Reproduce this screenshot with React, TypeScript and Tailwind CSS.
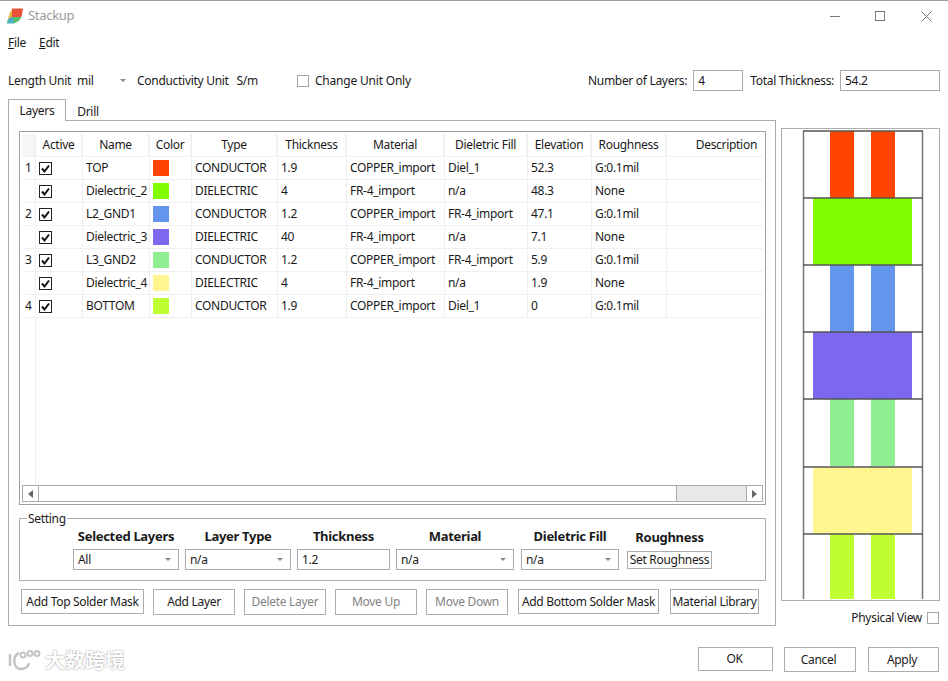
import React from 'react';

const rows = [
  { no: '1', name: 'TOP', color: 'bg-[#ff4500]', type: 'CONDUCTOR', th: '1.9', mat: 'COPPER_import', fill: 'Diel_1', el: '52.3', rough: 'G:0.1mil' },
  { no: '', name: 'Dielectric_2', color: 'bg-[#7fff00]', type: 'DIELECTRIC', th: '4', mat: 'FR-4_import', fill: 'n/a', el: '48.3', rough: 'None' },
  { no: '2', name: 'L2_GND1', color: 'bg-[#6495ed]', type: 'CONDUCTOR', th: '1.2', mat: 'COPPER_import', fill: 'FR-4_import', el: '47.1', rough: 'G:0.1mil' },
  { no: '', name: 'Dielectric_3', color: 'bg-[#7b68ee]', type: 'DIELECTRIC', th: '40', mat: 'FR-4_import', fill: 'n/a', el: '7.1', rough: 'None' },
  { no: '3', name: 'L3_GND2', color: 'bg-[#90ee90]', type: 'CONDUCTOR', th: '1.2', mat: 'COPPER_import', fill: 'FR-4_import', el: '5.9', rough: 'G:0.1mil' },
  { no: '', name: 'Dielectric_4', color: 'bg-[#fff68f]', type: 'DIELECTRIC', th: '4', mat: 'FR-4_import', fill: 'n/a', el: '1.9', rough: 'None' },
  { no: '4', name: 'BOTTOM', color: 'bg-[#bfff32]', type: 'CONDUCTOR', th: '1.9', mat: 'COPPER_import', fill: 'Diel_1', el: '0', rough: 'G:0.1mil' },
];

const cell = 'shrink-0 h-full flex items-center border-r border-[#f0f0f0] pl-[3px] whitespace-nowrap';
const head = 'shrink-0 h-full flex items-center justify-center border-r-2 border-[#f0f0f0] whitespace-nowrap';

const Check = () => (
  <svg width="13" height="13" viewBox="0 0 13 13" className="shrink-0">
    <rect x="0.5" y="0.5" width="12" height="12" fill="#fff" stroke="#222" />
    <path d="M3 6.5 L5.5 9.5 L10 3.5" fill="none" stroke="#111" strokeWidth="2" />
  </svg>
);

const Arrow = () => (
  <svg width="6" height="3" viewBox="0 0 6 3" className="shrink-0">
    <path d="M0 0 H6 L3 3 Z" fill="#8a8a8a" />
  </svg>
);

const Select = ({ value, className }: { value: string; className: string }) => (
  <div className={`h-[21px] border border-[#ababab] flex items-center justify-between pl-1 pr-[7px] ${className}`}>
    <span>{value}</span>
    <Arrow />
  </div>
);

const Btn = ({ label, className, off }: { label: string; className: string; off?: boolean }) => (
  <div className={`border border-[#adadad] flex items-center justify-center whitespace-nowrap ${off ? 'text-[#838383]' : ''} ${className}`}>
    {label}
  </div>
);

const Label = ({ text, className }: { text: string; className: string }) => (
  <div className={`text-center font-bold text-[13px] whitespace-nowrap ${className}`}>{text}</div>
);

const StackView = () => {
  const tops = [131, 198, 265, 332, 399, 467, 534];
  const colors = ['#ff4500', '#7fff00', '#6495ed', '#7b68ee', '#90ee90', '#fff68f', '#bfff32'];
  return (
    <svg width="157" height="471" viewBox="782 129 157 471" className="block">
      {tops.map((y, i) =>
        i % 2 === 0 ? (
          <g key={y}>
            <rect x="830" y={y} width="24" height={i === 6 ? 65 : 67} fill={colors[i]} />
            <rect x="871" y={y} width="24" height={i === 6 ? 65 : 67} fill={colors[i]} />
          </g>
        ) : (
          <rect key={y} x="813" y={y} width="99" height="67" fill={colors[i]} />
        ),
      )}
      <path d="M803.5 131 V599 M922.5 131 V599" stroke="#777" strokeWidth="1.5" fill="none" />
      {tops.map((y) => (
        <path key={y} d={`M803 ${y} H923`} stroke="#555" strokeWidth="1.5" />
      ))}
    </svg>
  );
};

export default function App() {
  return (
    <div className="w-[948px] h-[681px] bg-white text-[12px] tracking-[-0.3px] text-[#1a1a1a] overflow-hidden flex flex-col font-['Noto_Sans','Open_Sans',sans-serif]">
      {/* title bar */}
      <div className="h-[31px] shrink-0 border-t border-[#9f9f9f] flex items-center pl-[7px]">
        <svg width="16" height="16" viewBox="0 0 16 16" className="shrink-0">
          <path d="M5 0.5 H16 L14.5 9 L4 10 Z" fill="#e8503a" />
          <path d="M3 4 L5 2 V10 L2.5 13 H0.5 Z" fill="#e8b83a" />
          <path d="M0.5 12 L4 9 H9 L7 15.5 H0 Z" fill="#4ab0c0" />
          <path d="M6 9 H14.5 L12 13 L7 15.5 Z" fill="#58c070" />
        </svg>
        <span className="ml-[5px] text-[#9a9a9a] text-[13px]">Stackup</span>
        <div className="ml-auto flex items-center pr-[16px]">
          <div className="w-[10px] h-px bg-[#777]" />
          <div className="ml-[35px] w-[10px] h-[10px] border border-[#777]" />
          <svg width="11" height="11" viewBox="0 0 11 11" className="ml-[36px]">
            <path d="M0.5 0.5 L10.5 10.5 M10.5 0.5 L0.5 10.5" stroke="#777" fill="none" />
          </svg>
        </div>
      </div>

      {/* menu */}
      <div className="h-[23px] shrink-0 flex items-center gap-[13px] pl-2">
        <span><span className="underline">F</span>ile</span>
        <span><span className="underline">E</span>dit</span>
      </div>

      {/* units */}
      <div className="h-[21px] shrink-0 mt-[16px] flex items-center pl-2 pr-2">
        <span>Length Unit</span>
        <span className="ml-[6px] w-[43px]">mil</span>
        <Arrow />
        <span className="ml-[11px]">Conductivity Unit</span>
        <span className="ml-[8px]">S/m</span>
        <div className="ml-[39px] w-[12px] h-[12px] border border-[#a5a5a5]" />
        <span className="ml-[6px] tracking-[-0.2px]">Change Unit Only</span>
        <span className="ml-auto">Number of Layers:</span>
        <div className="ml-[6px] w-[50px] h-[21px] border border-[#ababab] flex items-center pl-1">4</div>
        <span className="ml-[7px]">Total Thickness:</span>
        <div className="ml-[6px] w-[100px] h-[21px] border border-[#ababab] flex items-center pl-1">54.2</div>
      </div>

      {/* main area */}
      <div className="flex pl-2 pr-2 mt-[8px]">
        <div className="w-[768px] shrink-0">
          <div className="flex h-[22px] items-end relative z-10 -mb-px">
            <div className="w-[58px] h-[22px] pt-px border border-b-0 border-[#acacac] bg-white flex items-center justify-center">Layers</div>
            <div className="w-[44px] h-[21px] pt-[2px] flex items-center justify-center">Drill</div>
          </div>
          <div className="h-[506px] border border-[#acacac] pt-[10px] pl-[10px] pr-[9px]">
            {/* table */}
            <div className="h-[374px] border border-[#a0a0a0] p-[2px] flex flex-col">
              <div className="flex h-[23px] shrink-0 border-b border-[#f0f0f0]">
                <div className={`${head} w-[14px] bg-[#f7f7f7]`} />
                <div className={`${head} w-[47px]`}>Active</div>
                <div className={`${head} w-[67px]`}>Name</div>
                <div className={`${head} w-[42px]`}>Color</div>
                <div className={`${head} w-[86px]`}>Type</div>
                <div className={`${head} w-[69px]`}>Thickness</div>
                <div className={`${head} w-[98px]`}>Material</div>
                <div className={`${head} w-[83px]`}>Dieletric Fill</div>
                <div className={`${head} w-[64px]`}>Elevation</div>
                <div className={`${head} w-[75px]`}>Roughness</div>
                <div className="flex-1 h-full flex items-center justify-end pr-[6px]">Description</div>
              </div>
              {rows.map((r) => (
                <div key={r.name} className="flex h-[23px] shrink-0 border-b border-[#f0f0f0]">
                  <div className={`${cell} w-[14px]`}>{r.no}</div>
                  <div className={`${cell} w-[47px]`}><Check /></div>
                  <div className={`${cell} w-[67px]`}>{r.name}</div>
                  <div className={`${cell} w-[42px]`}><div className={`w-4 h-4 ${r.color}`} /></div>
                  <div className={`${cell} w-[86px]`}>{r.type}</div>
                  <div className={`${cell} w-[69px]`}>{r.th}</div>
                  <div className={`${cell} w-[98px]`}>{r.mat}</div>
                  <div className={`${cell} w-[83px]`}>{r.fill}</div>
                  <div className={`${cell} w-[64px]`}>{r.el}</div>
                  <div className={`${cell} w-[75px]`}>{r.rough}</div>
                  <div className="flex-1" />
                </div>
              ))}
              <div className="flex-1 min-h-0 flex">
                <div className="w-[14px] border-r border-[#f0f0f0]" />
              </div>
              {/* horizontal scrollbar */}
              <div className="h-[17px] shrink-0 border border-[#ababab] flex items-stretch">
                <div className="w-[16px] border-r border-[#ababab] flex items-center justify-center">
                  <svg width="5" height="8" viewBox="0 0 5 8"><path d="M5 0 V8 L0 4 Z" fill="#666" /></svg>
                </div>
                <div className="w-[638px] border-r border-[#ababab]" />
                <div className="flex-1 bg-[#e8e8e8]" />
                <div className="w-[16px] border-l border-[#ababab] flex items-center justify-center">
                  <svg width="5" height="8" viewBox="0 0 5 8"><path d="M0 0 V8 L5 4 Z" fill="#666" /></svg>
                </div>
              </div>
            </div>

            {/* setting group */}
            <div className="relative mt-[13px] h-[63px] border border-[#acacac]">
              <span className="absolute -top-[8px] left-[7px] bg-white px-px leading-[16px]">Setting</span>
              <div className="flex items-end pl-[53px] h-[27px]">
                <Label text="Selected Layers" className="w-[106px]" />
                <Label text="Layer Type" className="w-[106px] ml-[6px]" />
                <Label text="Thickness" className="w-[93px] ml-[6px]" />
                <Label text="Material" className="w-[118px] ml-[6px]" />
                <Label text="Dieletric Fill" className="w-[98px] ml-[7px]" />
                <Label text="Roughness" className="w-[85px] ml-[8px] -mb-px" />
              </div>
              <div className="flex items-start pl-[53px] mt-[3px]">
                <Select value="All" className="w-[106px]" />
                <Select value="n/a" className="w-[106px] ml-[6px]" />
                <div className="w-[93px] h-[21px] ml-[6px] border border-[#ababab] flex items-center pl-1">1.2</div>
                <Select value="n/a" className="w-[118px] ml-[6px]" />
                <Select value="n/a" className="w-[98px] ml-[7px]" />
                <Btn label="Set Roughness" className="w-[85px] h-[18px] ml-[8px] mt-[2px]" />
              </div>
            </div>

            {/* buttons */}
            <div className="flex items-start mt-[8px] pl-[2px]">
              <Btn label="Add Top Solder Mask" className="w-[123px] h-[25px]" />
              <Btn label="Add Layer" className="w-[82px] h-[26px] ml-[9px]" />
              <Btn label="Delete Layer" off className="w-[82px] h-[26px] ml-[9px]" />
              <Btn label="Move Up" off className="w-[82px] h-[26px] ml-[9px]" />
              <Btn label="Move Down" off className="w-[82px] h-[26px] ml-[9px]" />
              <Btn label="Add Bottom Solder Mask" className="w-[141px] h-[25px] ml-[10px]" />
              <Btn label="Material Library" className="w-[89px] h-[25px] ml-[11px]" />
            </div>
          </div>
        </div>

        {/* preview */}
        <div className="ml-[5px] w-[159px] shrink-0 pt-[29px]">
          <div className="h-[473px] border border-[#acacac]">
            <StackView />
          </div>
          <div className="flex items-center justify-end mt-[8px]">
            <span>Physical View</span>
            <div className="ml-[5px] mr-px w-[12px] h-[12px] border border-[#a5a5a5]" />
          </div>
        </div>
      </div>

      {/* footer */}
      <div className="flex items-center pl-2 pr-[9px] mt-[20px]">
        <div className="flex items-center gap-[3px] text-white">
          <svg width="34" height="22" viewBox="0 0 34 22" fill="none" stroke="#c4c4c4" strokeWidth="2.5">
            <path d="M2 5 V17 M11 4 C4 7 5 20 13 20 C17 20 20 18 21 14" />
            <circle cx="15" cy="6" r="2.5" strokeWidth="2" />
            <circle cx="22" cy="4.5" r="2.5" strokeWidth="2" />
            <circle cx="29" cy="4.5" r="2.5" strokeWidth="2" />
          </svg>
          <span className="text-[20px] leading-[24px] tracking-normal font-bold font-['Noto_Sans_CJK_SC',sans-serif] [text-shadow:0_0_2px_#8a8a8a]">大数跨境</span>
        </div>
        <div className="ml-auto flex">
          <Btn label="OK" className="w-[75px] h-[24px] pr-[2px]" />
          <Btn label="Cancel" className="w-[72px] h-[25px] ml-[11px] pr-[3px]" />
          <Btn label="Apply" className="w-[71px] h-[25px] ml-[12px] pr-[3px]" />
        </div>
      </div>
    </div>
  );
}
